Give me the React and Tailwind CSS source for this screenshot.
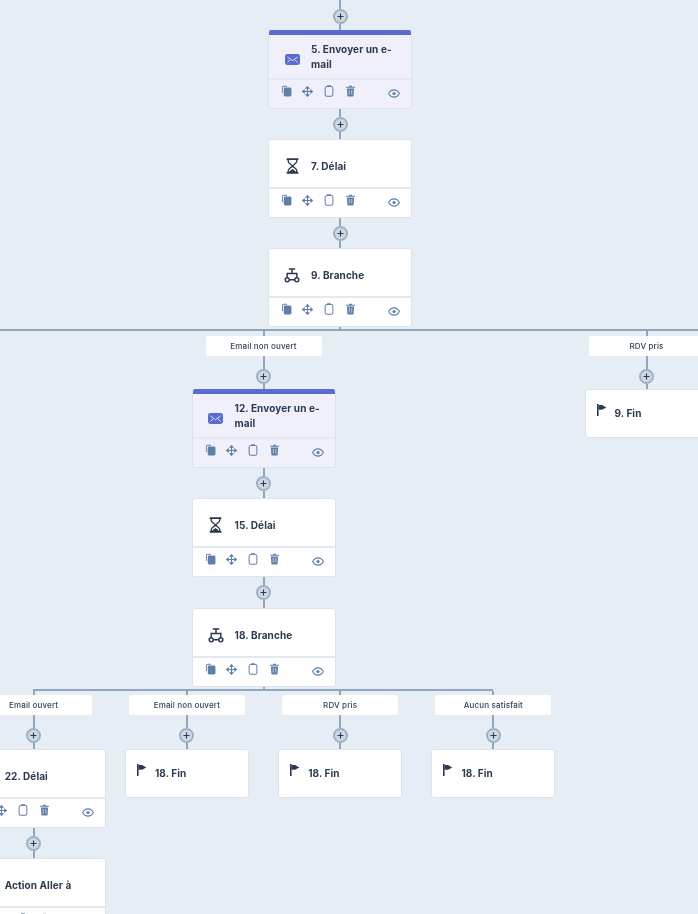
import React from "react";

const ink = "#2b3a50";
const act = "#5f7fa8";

function Copy() {
  return (
    <svg width="11" height="12" viewBox="0 0 12 13" fill={act}>
      <path d="M1 3.2C1 1.6 1.8 .8 3.2 .8h3.4v1H3.4c-.9 0-1.4.5-1.4 1.4v5.6H1z" />
      <rect x="3" y="2.6" width="8.4" height="9.8" rx="1.6" />
    </svg>
  );
}
function MoveI() {
  return (
    <svg width="11" height="11" viewBox="0 0 13 13" fill="none" stroke={act} strokeWidth="1.3">
      <path d="M6.5 1.5v10M1.5 6.5h10" />
      <path d="M4.9 2.6 6.5.8l1.6 1.8zM4.9 10.4l1.6 1.8 1.6-1.8zM2.6 4.9.8 6.5l1.8 1.6zM10.4 4.9l1.8 1.6-1.8 1.6z" fill={act} />
    </svg>
  );
}
function Clip() {
  return (
    <svg width="10" height="12" viewBox="0 0 10 13" fill="none" stroke={act} strokeWidth="1.1">
      <rect x=".8" y="1.6" width="8.4" height="10.6" rx="2" />
      <path d="M3 1h4" strokeWidth="1.4" />
    </svg>
  );
}
function Trash() {
  return (
    <svg width="9" height="12" viewBox="0 0 10 13" fill={act}>
      <path d="M3.4 .6h3.2v1.2H10v1.1H0V1.8h3.4z" />
      <path d="M1 3.8h8l-.5 7.6c0 .7-.5 1.1-1.1 1.1H2.6c-.6 0-1.1-.4-1.1-1.1z" />
      <path d="M3.6 5.4v5M6.4 5.4v5" stroke="#dfe6f0" strokeWidth=".8" />
    </svg>
  );
}
function EyeI() {
  return (
    <svg width="12" height="9" viewBox="0 0 12 9" fill="none" stroke={act} strokeWidth="1.1">
      <path d="M.6 4.5C2 2 3.8.9 6 .9s4 1.1 5.4 3.6C10 7 8.2 8.1 6 8.1S2 7 .6 4.5z" />
      <circle cx="6" cy="4.5" r="1.6" fill={act} stroke="none" />
    </svg>
  );
}
function Mail() {
  return (
    <svg width="15" height="11" viewBox="0 0 15 11">
      <rect width="15" height="11" rx="2.4" fill="#5c6bd0" />
      <path d="M2.4 3 7.5 6.6 12.6 3M2.4 8.4l2.8-2.6M12.6 8.4 9.8 5.8" stroke="#e8eafa" strokeWidth=".9" fill="none" />
    </svg>
  );
}
function Hourglass() {
  return (
    <svg width="13" height="16" viewBox="0 0 12 15" fill="none" stroke={ink} strokeWidth="1.3">
      <path d="M.5 1h11M.5 14h11" strokeWidth="1.7" />
      <path d="M2 1v2.2c0 1.6 3 3 4 4.3 1-1.3 4-2.7 4-4.3V1M2 14v-2.2c0-1.6 3-3 4-4.3 1 1.3 4 2.7 4 4.3V14" />
      <path d="M2.6 13.6c.3-1.6 2.2-2.6 3.4-3.4 1.2.8 3.1 1.8 3.4 3.4z" fill={ink} stroke="none" />
    </svg>
  );
}
function BranchI() {
  return (
    <svg width="16" height="15" viewBox="0 0 15 14" fill="none" stroke={ink} strokeWidth="1.4">
      <path d="M4.5 1h6M7.5 1v4M3 9V5.2h9V9" />
      <circle cx="3" cy="11" r="1.9" />
      <circle cx="12" cy="11" r="1.9" />
      <path d="M5 11h5" />
    </svg>
  );
}
function FlagI() {
  return (
    <svg width="10" height="12" viewBox="0 0 10 12" fill={ink}>
      <rect x="0" y="0" width="1.6" height="12" />
      <path d="M1.5 1h3.6l4.2 2.4-4.2 2.4H1.5z" />
    </svg>
  );
}

function Actions({ tint }) {
  return (
    <div className={`relative flex h-[30px] shrink-0 items-start border-t-2 border-[#e3e9f1] ${tint ? "bg-[#eff0fa]" : "bg-white"}`}>
      <div className="mt-[5px] ml-[12px] flex items-center">
        <span className="flex w-[11px] justify-center"><Copy /></span>
        <span className="ml-[10px] flex w-[11px] justify-center"><MoveI /></span>
        <span className="ml-[11px] flex w-[10px] justify-center"><Clip /></span>
        <span className="ml-[12px] flex w-[9px] justify-center"><Trash /></span>
      </div>
      <span className="absolute top-[9px] right-[11px] flex"><EyeI /></span>
    </div>
  );
}

function Card({ icon, title, mail }) {
  return (
    <div
      className={`flex h-[79px] w-[144px] shrink-0 flex-col overflow-hidden rounded-[3px] border border-[#dbe3ee] ${mail ? "border-t-0 bg-[#eff0fa]" : "bg-white"}`}
    >
      {mail && <div className="h-[5px] shrink-0 bg-[#5c6bd0]" />}
      <div className={`flex flex-1 items-center pl-[15px] ${mail ? "pr-[8px]" : "pt-[5px]"}`}>
        <span className={`flex w-[16px] shrink-0 justify-center ${mail ? "mt-[5px]" : ""}`}>{icon}</span>
        <span className="ml-[11px] text-[10px] leading-[15px] font-bold tracking-[0.1px] text-[#2b3a50]">{title}</span>
      </div>
      <Actions tint={mail} />
    </div>
  );
}

function FinCard({ title }) {
  return (
    <div className="flex h-[49px] w-[124px] shrink-0 items-start rounded-[3px] border border-[#dbe3ee] bg-white">
      <span className="mt-[14px] ml-[11px] flex"><FlagI /></span>
      <span className="mt-[16px] ml-[8px] text-[10px] leading-[15px] font-bold tracking-[0.1px] text-[#2b3a50]">{title}</span>
    </div>
  );
}

function Plus() {
  return (
    <div className="flex h-[15px] w-[15px] shrink-0 items-center justify-center rounded-full border-2 border-[#9fb0c5] bg-[#cdd8e4]">
      <svg width="7" height="7" viewBox="0 0 7 7" stroke="#2b3a50" strokeWidth="1.1"><path d="M3.5 .5v6M.5 3.5h6" /></svg>
    </div>
  );
}

/* vertical connector: line, plus button, line */
function Link({ top = "h-[7.5px]", bottom = "h-[7.5px]" }) {
  return (
    <div className="flex shrink-0 flex-col items-center">
      <div className={`w-[2px] bg-[#91a5bd] ${top}`} />
      <Plus />
      <div className={`w-[2px] bg-[#91a5bd] ${bottom}`} />
    </div>
  );
}

function Label({ text }) {
  return (
    <div className="flex h-[20px] w-[116px] shrink-0 items-center justify-center rounded-[2px] bg-white text-[8px] font-medium tracking-[0.15px] text-[#33435a]">
      {text}
    </div>
  );
}

/* a labelled branch: tick under the rail, the label, then a link */
function Branch({ label, tick, bottom, children }) {
  return (
    <div className="flex flex-col items-center">
      <div className={`w-[2px] shrink-0 bg-[#91a5bd] ${tick}`} />
      <Label text={label} />
      <Link top="h-[12.5px]" bottom={bottom} />
      {children}
    </div>
  );
}

export default function App() {
  return (
    <div
      className="flex h-[914px] w-[698px] flex-col overflow-hidden bg-[#e6edf5] blur-[0.5px]"
      style={{ fontFamily: '"Inter", "Noto Sans", sans-serif' }}
    >
      <div className="flex w-[680px] shrink-0 flex-col items-center">
        <Link top="h-[8.5px]" bottom="h-[6.5px]" />
        <Card mail icon={<Mail />} title="5. Envoyer un e-mail" />
        <Link />
        <Card icon={<Hourglass />} title="7. Délai" />
        <Link />
        <Card icon={<BranchI />} title="9. Branche" />
        <div className="h-[2px] w-[2px] bg-[#91a5bd]" />
      </div>

      <div className="h-[2px] w-full shrink-0 bg-[#91a5bd]" />

      <div className="grid w-[766px] shrink-0 grid-cols-[527px_239px] items-start">
        <Branch label="Email non ouvert" tick="h-[5px]" bottom="h-[5.5px]">
          <Card mail icon={<Mail />} title="12. Envoyer un e-mail" />
          <Link />
          <Card icon={<Hourglass />} title="15. Délai" />
          <Link bottom="h-[8.5px]" />
          <Card icon={<BranchI />} title="18. Branche" />
          <div className="h-[2px] w-[2px] shrink-0 bg-[#91a5bd]" />
          <div className="ml-[33px] h-[2px] w-[460px] shrink-0 self-start bg-[#91a5bd]" />
          <div className="ml-[-43px] grid w-[613px] shrink-0 grid-cols-4 items-start self-start">
            <Branch label="Email ouvert" tick="h-[4px]" bottom="h-[6.5px]">
              <Card icon={<Hourglass />} title="22. Délai" />
              <Link />
              <Card icon={<Hourglass />} title="Action Aller à" />
            </Branch>
            <Branch label="Email non ouvert" tick="h-[4px]" bottom="h-[6.5px]">
              <FinCard title="18. Fin" />
            </Branch>
            <Branch label="RDV pris" tick="h-[4px]" bottom="h-[6.5px]">
              <FinCard title="18. Fin" />
            </Branch>
            <Branch label="Aucun satisfait" tick="h-[4px]" bottom="h-[6.5px]">
              <FinCard title="18. Fin" />
            </Branch>
          </div>
        </Branch>
        <Branch label="RDV pris" tick="h-[5px]" bottom="h-[5.5px]">
          <FinCard title="9. Fin" />
        </Branch>
      </div>
    </div>
  );
}
